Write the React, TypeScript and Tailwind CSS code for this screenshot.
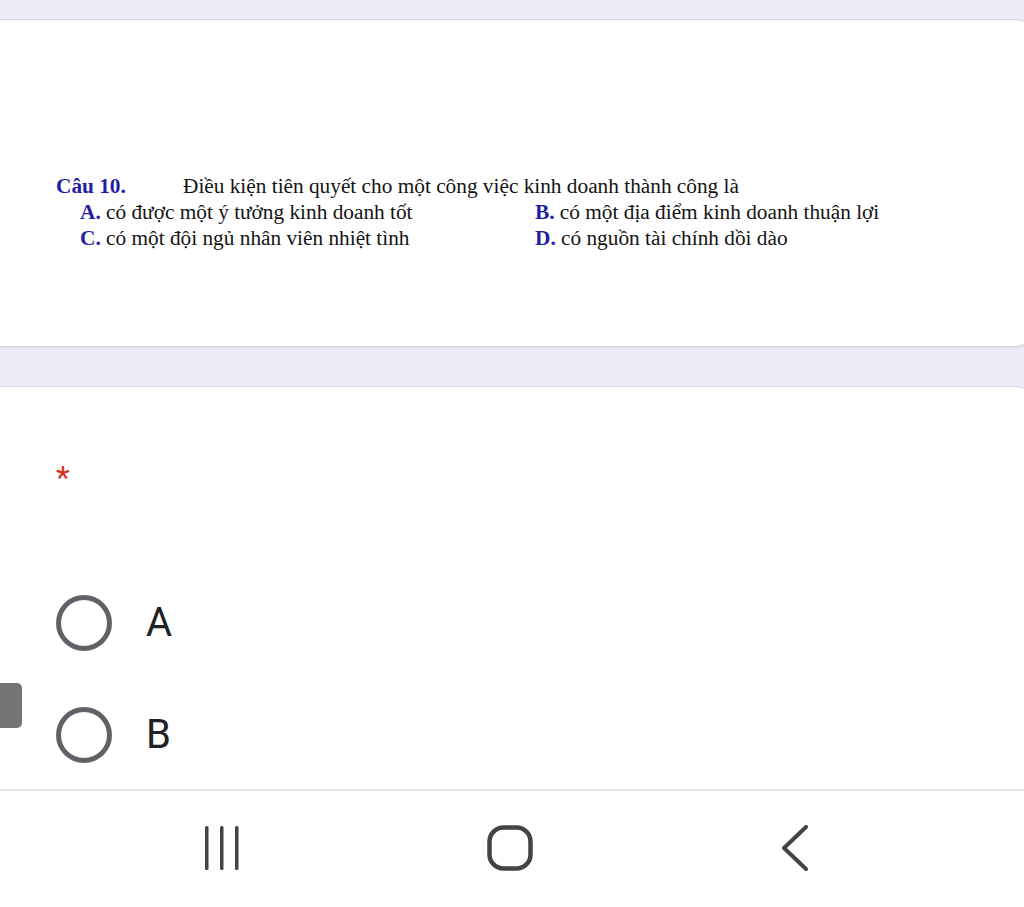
import React from "react";

const serif = "font-['Liberation_Serif','Times_New_Roman',serif]";

function Radio({ label }: { label: string }) {
  return (
    <div className="flex items-center h-[56px]">
      <span className="w-[56px] h-[56px] rounded-full border-[5px] border-[#5f6368] shrink-0" />
      <span className="ml-[34px] text-[40px] leading-none text-[#202124] font-['Roboto',sans-serif]">{label}</span>
    </div>
  );
}

export default function App() {
  return (
    <div className="relative w-[1024px] h-[907px] overflow-hidden bg-[#efebf8] flex flex-col">
      {/* scrolling form area */}
      <div className="flex-1 overflow-hidden pt-[19px]">
        {/* question image card */}
        <div className="ml-[-20px] w-[1052px] h-[328px] bg-white rounded-[16px] border border-[#d6d4dc] shadow-[0_1px_2px_rgba(0,0,0,0.08)]">
          <div className={`pl-[75px] pt-[153px] text-[21.3px] leading-[26px] text-[#141414] ${serif}`}>
            <div className="flex">
              <span className="w-[127px] font-bold text-[#1f1f9f]">Câu 10.</span>
              <span>Điều kiện tiên quyết cho một công việc kinh doanh thành công là</span>
            </div>
            <div className="grid grid-cols-[455px_1fr] pl-[24px]">
              <span><b className="text-[#1f1f9f]">A.</b> có được một ý tưởng kinh doanh tốt</span>
              <span><b className="text-[#1f1f9f]">B.</b> có một địa điểm kinh doanh thuận lợi</span>
              <span><b className="text-[#1f1f9f]">C.</b> có một đội ngủ nhân viên nhiệt tình</span>
              <span><b className="text-[#1f1f9f]">D.</b> có nguồn tài chính dồi dào</span>
            </div>
          </div>
        </div>

        {/* answer card */}
        <div className="mt-[39px] ml-[-20px] w-[1052px] h-[500px] bg-white rounded-[16px] border border-[#d6d4dc]">
          <div className="pl-[75px] pt-[70px]">
            <div className="text-[32px] leading-[40px] text-[#d93025] font-['Roboto',sans-serif]">*</div>
            <div className="mt-[98px] flex flex-col gap-[56px]">
              <Radio label="A" />
              <Radio label="B" />
            </div>
          </div>
        </div>
      </div>

      {/* side tab */}
      <div className="absolute left-0 top-[683px] w-[22px] h-[45px] bg-[#757575] rounded-r-[5px]" />

      {/* system navigation bar */}
      <div className="h-[118px] shrink-0 bg-white border-t-2 border-[#e6e6e6] flex items-center pl-[204px] gap-[247px] pb-[2px]">
        <svg width="36" height="46" viewBox="0 0 36 46" className="text-[#444]">
          <rect x="1" y="1" width="3.5" height="44" rx="1.5" fill="currentColor" />
          <rect x="16" y="1" width="3.5" height="44" rx="1.5" fill="currentColor" />
          <rect x="31" y="1" width="3.5" height="44" rx="1.5" fill="currentColor" />
        </svg>
        <svg width="46" height="46" viewBox="0 0 46 46" className="text-[#444]">
          <rect x="2.5" y="2.5" width="41" height="41" rx="14" fill="none" stroke="currentColor" strokeWidth="4.5" />
        </svg>
        <svg width="28" height="46" viewBox="0 0 28 46" className="text-[#444]">
          <path d="M26 2 L4 23 L26 44" fill="none" stroke="currentColor" strokeWidth="4" strokeLinecap="round" strokeLinejoin="round" />
        </svg>
      </div>
    </div>
  );
}
